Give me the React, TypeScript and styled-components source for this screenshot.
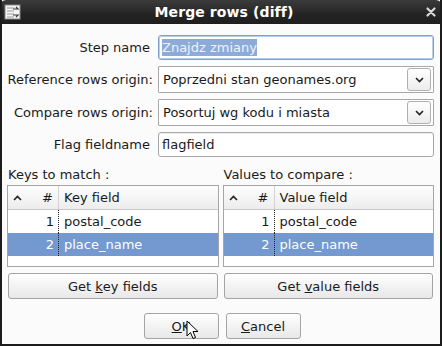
import React from "react";
import styled, { createGlobalStyle } from "styled-components";

const GlobalStyle = createGlobalStyle`
  html, body {
    margin: 0;
    padding: 0;
    background: #ffffff;
  }
  * {
    box-sizing: border-box;
  }
`;

const Window = styled.div`
  width: 442px;
  height: 346px;
  display: flex;
  flex-direction: column;
  background: #fbfbfb;
  border-left: 2px solid #1c1c1c;
  border-right: 2px solid #1c1c1c;
  border-bottom: 2px solid #1c1c1c;
  font-family: "DejaVu Sans", sans-serif;
  font-size: 13px;
  color: #1a1a1a;
  position: relative;
  overflow: hidden;
`;

const TitleBar = styled.div`
  height: 24px;
  margin: 0 -2px;
  display: flex;
  align-items: center;
  justify-content: space-between;
  padding: 0 6px 0 4px;
  background: linear-gradient(#3b3b3b, #242424 60%, #1e1e1e);
  border-radius: 6px 6px 0 0;
  color: #ffffff;
`;

const Title = styled.div`
  font-weight: bold;
  font-size: 14px;
  letter-spacing: 0.1px;
`;

const Content = styled.div`
  flex: 1;
  display: flex;
  flex-direction: column;
  padding: 11px 6px 0 5px;
`;

const Form = styled.div`
  display: grid;
  grid-template-columns: 146px 1fr;
  column-gap: 5px;
  row-gap: 6px;
  align-items: center;
`;

const Label = styled.div<{ $shift?: number }>`
  text-align: right;
  white-space: nowrap;
  padding-right: ${(p) => p.$shift ?? 0}px;
`;

const TextField = styled.div<{ $focused?: boolean }>`
  height: 25px;
  display: flex;
  align-items: center;
  padding: 0 3px;
  background: #ffffff;
  border: 1px solid ${(p) => (p.$focused ? "#7f9fcc" : "#a8a8a8")};
  border-radius: 3px;
  box-shadow: ${(p) => (p.$focused ? "inset 0 0 0 1px #b9cde9" : "inset 0 1px 1px rgba(0,0,0,0.08)")};
`;

const Selected = styled.span`
  background: #8cabd9;
  color: #eef3fa;
  padding: 1px 0;
`;

const Combo = styled.div`
  height: 27px;
  display: flex;
  align-items: center;
  justify-content: space-between;
  padding: 0 2px 0 4px;
  background: #ffffff;
  border: 1px solid #a8a8a8;
  border-radius: 1px;
`;

const ComboButton = styled.div`
  width: 24px;
  height: 23px;
  display: flex;
  align-items: center;
  justify-content: center;
  border: 1px solid #b0b0b0;
  border-radius: 3px;
  background: linear-gradient(#ffffff, #ececec);
`;

const Columns = styled.div`
  display: grid;
  grid-template-columns: 1fr 1fr;
  column-gap: 4px;
  margin-top: 6px;
`;

const Panel = styled.div`
  display: flex;
  flex-direction: column;
`;

const SectionLabel = styled.div`
  height: 22px;
  display: flex;
  align-items: center;
  padding-left: 1px;
`;

const Table = styled.div`
  height: 82px;
  border: 1px solid #a6a6a6;
  background: #ffffff;
  display: flex;
  flex-direction: column;
`;

const HeaderRow = styled.div`
  height: 24px;
  display: grid;
  grid-template-columns: 22px 29px 1fr;
  align-items: center;
  background: linear-gradient(#fdfdfd, #ededed);
  border-bottom: 1px solid #c8c8c8;
`;

const HeaderCell = styled.div<{ $right?: boolean; $divider?: boolean }>`
  height: 100%;
  display: flex;
  align-items: center;
  justify-content: ${(p) => (p.$right ? "flex-end" : "flex-start")};
  padding: ${(p) => (p.$right ? "0 5px 0 0" : "0 0 0 5px")};
  border-right: ${(p) => (p.$divider ? "1px solid #d2d2d2" : "none")};
`;

const Row = styled.div<{ $selected?: boolean }>`
  height: 23px;
  display: grid;
  grid-template-columns: 51px 1fr;
  align-items: center;
  background: ${(p) => (p.$selected ? "#7399d0" : "#ffffff")};
  color: ${(p) => (p.$selected ? "#ffffff" : "#1a1a1a")};
`;

const NumCell = styled.div`
  height: 100%;
  display: flex;
  align-items: center;
  justify-content: flex-end;
  padding-right: 4px;
  border-right: 1px dotted #222222;
`;

const FieldCell = styled.div`
  padding-left: 5px;
`;

const Button = styled.div<{ $width?: number }>`
  height: 26px;
  width: ${(p) => (p.$width ? `${p.$width}px` : "auto")};
  display: flex;
  align-items: center;
  justify-content: center;
  border: 1px solid #a4a4a4;
  border-radius: 3px;
  background: linear-gradient(#fefefe, #e8e8e8);
  box-shadow: inset 0 1px 0 #ffffff;
`;

const WideButton = styled(Button)`
  margin-top: 6px;
  margin-right: 1px;
  margin-left: 1px;
`;

const Footer = styled.div`
  display: flex;
  justify-content: center;
  gap: 7px;
  margin-top: 14px;
  padding-left: 3px;
  position: relative;
`;

const Cursor = styled.svg`
  position: absolute;
  left: 179px;
  top: 7px;
`;

const AppIcon = () => (
  <svg width="18" height="16" viewBox="0 0 18 16">
    <rect x="1" y="1" width="15" height="14" fill="#f4f4f4" stroke="#8a8a8a" />
    <path d="M3 4h7M3 7h7M3 10h7M3 13h7" stroke="#9a9a9a" strokeWidth="1" />
    <path d="M9 5h5l-2 -2M9 11h5l-2 2" stroke="#3a3a3a" strokeWidth="1.2" fill="none" />
  </svg>
);

const CloseIcon = () => (
  <svg width="10" height="10" viewBox="0 0 10 10">
    <path d="M1.5 1.5L8.5 8.5M8.5 1.5L1.5 8.5" stroke="#d8d8d8" strokeWidth="2.2" strokeLinecap="round" />
  </svg>
);

const Chevron = ({ up }: { up?: boolean }) => (
  <svg width="9" height="6" viewBox="0 0 9 6">
    <path d={up ? "M1 5L4.5 1.5L8 5" : "M1 1L4.5 4.5L8 1"} stroke="#222" strokeWidth="1.6" fill="none" />
  </svg>
);

const FieldTable = ({ title }: { title: string }) => (
  <Table>
    <HeaderRow>
      <HeaderCell>
        <Chevron up />
      </HeaderCell>
      <HeaderCell $right $divider>#</HeaderCell>
      <HeaderCell>{title}</HeaderCell>
    </HeaderRow>
    <Row>
      <NumCell>1</NumCell>
      <FieldCell>postal_code</FieldCell>
    </Row>
    <Row $selected>
      <NumCell>2</NumCell>
      <FieldCell>place_name</FieldCell>
    </Row>
  </Table>
);

export default function App() {
  return (
    <>
      <GlobalStyle />
      <Window>
        <TitleBar>
          <AppIcon />
          <Title>Merge rows (diff)</Title>
          <CloseIcon />
        </TitleBar>
        <Content>
          <Form>
            <Label $shift={3}>Step name</Label>
            <TextField $focused>
              <Selected>Znajdz zmiany</Selected>
            </TextField>
            <Label>Reference rows origin:</Label>
            <Combo>
              Poprzedni stan geonames.org
              <ComboButton>
                <Chevron />
              </ComboButton>
            </Combo>
            <Label>Compare rows origin:</Label>
            <Combo>
              Posortuj wg kodu i miasta
              <ComboButton>
                <Chevron />
              </ComboButton>
            </Combo>
            <Label $shift={3}>Flag fieldname</Label>
            <TextField>flagfield</TextField>
          </Form>
          <Columns>
            <Panel>
              <SectionLabel>Keys to match :</SectionLabel>
              <FieldTable title="Key field" />
              <WideButton>
                Get&nbsp;<u>k</u>ey fields
              </WideButton>
            </Panel>
            <Panel>
              <SectionLabel>Values to compare :</SectionLabel>
              <FieldTable title="Value field" />
              <WideButton>
                Get&nbsp;<u>v</u>alue fields
              </WideButton>
            </Panel>
          </Columns>
          <Footer>
            <Button $width={75}>
              <u>O</u>K
            </Button>
            <Button $width={75}>
              <u>C</u>ancel
            </Button>
            <Cursor width="13" height="20" viewBox="0 0 13 20">
              <path d="M1 1L1 16L4.5 12.5L7 18.5L9.5 17.5L7 11.5L12 11.5Z" fill="#ffffff" stroke="#000000" strokeWidth="1" strokeLinejoin="round" />
            </Cursor>
          </Footer>
        </Content>
      </Window>
    </>
  );
}
